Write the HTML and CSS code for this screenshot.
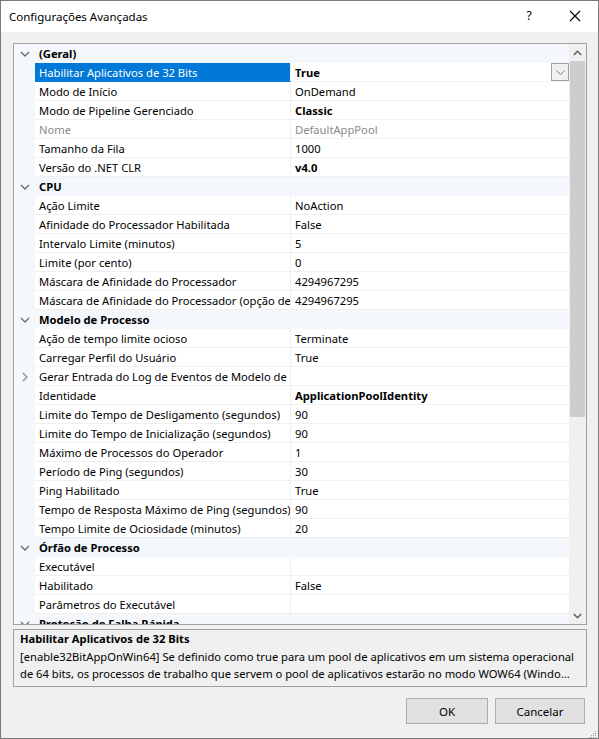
FILE: index.html
```html
<!DOCTYPE html>
<html lang="pt">
<head>
<meta charset="utf-8">
<link rel="stylesheet" href="styles.css">
</head>
<body>
<div class="window">
  <div class="titlebar">
    <span class="title">Configurações Avançadas</span>
    <span class="help">?</span>
    <span class="close"><svg width="12" height="12" viewBox="0 0 12 12"><path d="M1 1 L11 11 M11 1 L1 11" stroke="#000" stroke-width="1.1" fill="none"/></svg></span>
  </div>
  <div class="content">
    <div class="grid">
      <div class="rows">
        <div class="row cat"><span class="gut"><svg class="chev" width="10" height="6" viewBox="0 0 10 6"><path d="M1 1 L5 5 L9 1" stroke="#6d6d6d" stroke-width="1.4" fill="none"/></svg></span><span class="name">(Geral)</span><span class="val"></span></div>
        <div class="row sel"><span class="gut"></span><span class="name">Habilitar Aplicativos de 32 Bits</span><span class="val b">True<span class="dd"><svg width="9" height="5" viewBox="0 0 9 5"><path d="M0.5 0.5 L4.5 4.5 L8.5 0.5" stroke="#777" stroke-width="1" fill="none"/></svg></span></span></div>
        <div class="row"><span class="gut"></span><span class="name">Modo de Início</span><span class="val">OnDemand</span></div>
        <div class="row"><span class="gut"></span><span class="name">Modo de Pipeline Gerenciado</span><span class="val b">Classic</span></div>
        <div class="row dis"><span class="gut"></span><span class="name">Nome</span><span class="val">DefaultAppPool</span></div>
        <div class="row"><span class="gut"></span><span class="name">Tamanho da Fila</span><span class="val">1000</span></div>
        <div class="row"><span class="gut"></span><span class="name">Versão do .NET CLR</span><span class="val b">v4.0</span></div>
        <div class="row cat"><span class="gut"><svg class="chev" width="10" height="6" viewBox="0 0 10 6"><path d="M1 1 L5 5 L9 1" stroke="#6d6d6d" stroke-width="1.4" fill="none"/></svg></span><span class="name">CPU</span><span class="val"></span></div>
        <div class="row"><span class="gut"></span><span class="name">Ação Limite</span><span class="val">NoAction</span></div>
        <div class="row"><span class="gut"></span><span class="name">Afinidade do Processador Habilitada</span><span class="val">False</span></div>
        <div class="row"><span class="gut"></span><span class="name">Intervalo Limite (minutos)</span><span class="val">5</span></div>
        <div class="row"><span class="gut"></span><span class="name">Limite (por cento)</span><span class="val">0</span></div>
        <div class="row"><span class="gut"></span><span class="name">Máscara de Afinidade do Processador</span><span class="val">4294967295</span></div>
        <div class="row"><span class="gut"></span><span class="name">Máscara de Afinidade do Processador (opção de 64 bits)</span><span class="val">4294967295</span></div>
        <div class="row cat"><span class="gut"><svg class="chev" width="10" height="6" viewBox="0 0 10 6"><path d="M1 1 L5 5 L9 1" stroke="#6d6d6d" stroke-width="1.4" fill="none"/></svg></span><span class="name">Modelo de Processo</span><span class="val"></span></div>
        <div class="row"><span class="gut"></span><span class="name">Ação de tempo limite ocioso</span><span class="val">Terminate</span></div>
        <div class="row"><span class="gut"></span><span class="name">Carregar Perfil do Usuário</span><span class="val">True</span></div>
        <div class="row"><span class="gut"><svg class="chev" width="6" height="10" viewBox="0 0 6 10"><path d="M1 1 L5 5 L1 9" stroke="#8a8a8a" stroke-width="1.3" fill="none"/></svg></span><span class="name">Gerar Entrada do Log de Eventos de Modelo de Processo</span><span class="val"></span></div>
        <div class="row"><span class="gut"></span><span class="name">Identidade</span><span class="val b">ApplicationPoolIdentity</span></div>
        <div class="row"><span class="gut"></span><span class="name">Limite do Tempo de Desligamento (segundos)</span><span class="val">90</span></div>
        <div class="row"><span class="gut"></span><span class="name">Limite do Tempo de Inicialização (segundos)</span><span class="val">90</span></div>
        <div class="row"><span class="gut"></span><span class="name">Máximo de Processos do Operador</span><span class="val">1</span></div>
        <div class="row"><span class="gut"></span><span class="name">Período de Ping (segundos)</span><span class="val">30</span></div>
        <div class="row"><span class="gut"></span><span class="name">Ping Habilitado</span><span class="val">True</span></div>
        <div class="row"><span class="gut"></span><span class="name">Tempo de Resposta Máximo de Ping (segundos)</span><span class="val">90</span></div>
        <div class="row"><span class="gut"></span><span class="name">Tempo Limite de Ociosidade (minutos)</span><span class="val">20</span></div>
        <div class="row cat"><span class="gut"><svg class="chev" width="10" height="6" viewBox="0 0 10 6"><path d="M1 1 L5 5 L9 1" stroke="#6d6d6d" stroke-width="1.4" fill="none"/></svg></span><span class="name">Órfão de Processo</span><span class="val"></span></div>
        <div class="row"><span class="gut"></span><span class="name">Executável</span><span class="val"></span></div>
        <div class="row"><span class="gut"></span><span class="name">Habilitado</span><span class="val">False</span></div>
        <div class="row"><span class="gut"></span><span class="name">Parâmetros do Executável</span><span class="val"></span></div>
        <div class="row cat"><span class="gut"><svg class="chev" width="10" height="6" viewBox="0 0 10 6"><path d="M1 1 L5 5 L9 1" stroke="#6d6d6d" stroke-width="1.4" fill="none"/></svg></span><span class="name">Proteção de Falha Rápida</span><span class="val"></span></div>
      </div>
      <div class="scrollbar">
        <div class="arrow"><svg width="9" height="6" viewBox="0 0 9 6"><path d="M0.8 5 L4.5 1.3 L8.2 5" stroke="#606060" stroke-width="1.6" fill="none"/></svg></div>
        <div class="track"><div class="thumb"></div></div>
        <div class="arrow"><svg width="9" height="6" viewBox="0 0 9 6"><path d="M0.8 1 L4.5 4.7 L8.2 1" stroke="#606060" stroke-width="1.6" fill="none"/></svg></div>
      </div>
    </div>
    <div class="desc">
      <div class="desc-title">Habilitar Aplicativos de 32 Bits</div>
      <div class="desc-text">[enable32BitAppOnWin64] Se definido como true para um pool de aplicativos em um sistema operacional de 64 bits, os processos de trabalho que servem o pool de aplicativos estarão no modo WOW64 (Windo...</div>
    </div>
    <div class="buttons">
      <button class="btn ok">OK</button>
      <button class="btn cancel">Cancelar</button>
    </div>
  </div>
  <div class="grip"><svg width="10" height="10" viewBox="0 0 10 10"><g fill="#a0a0a0"><rect x="8" y="2" width="1" height="1"/><rect x="6" y="4" width="1" height="1"/><rect x="8" y="4" width="1" height="1"/><rect x="4" y="6" width="1" height="1"/><rect x="6" y="6" width="1" height="1"/><rect x="8" y="6" width="1" height="1"/><rect x="2" y="8" width="1" height="1"/><rect x="4" y="8" width="1" height="1"/><rect x="6" y="8" width="1" height="1"/><rect x="8" y="8" width="1" height="1"/></g></svg></div>
</div>
</body>
</html>
```

FILE: styles.css
```css
* { box-sizing: border-box; }
html, body { margin: 0; padding: 0; }
body {
  width: 599px;
  height: 739px;
  font-family: "Noto Sans", "Liberation Sans", sans-serif;
  font-size: 11.2px;
  color: #000;
  background: #f0f0f0;
  overflow: hidden;
}
.window {
  position: relative;
  width: 599px;
  height: 739px;
  border: 1px solid #7a7a7a;
  background: #f0f0f0;
  display: flex;
  flex-direction: column;
}
.titlebar {
  height: 31px;
  background: #fff;
  display: flex;
  align-items: center;
  padding-left: 8px;
  flex: none;
}
.title { font-size: 11.5px; flex: 1; padding-bottom: 1px; }
.help { width: 46px; text-align: center; font-size: 12px; padding-bottom: 2px; }
.close { width: 46px; display: flex; justify-content: center; padding-bottom: 1px; }
.content {
  flex: 1;
  padding: 11px 11px 0 12px;
  display: flex;
  flex-direction: column;
}
.grid {
  height: 582px;
  border: 1px solid #a0a0a0;
  background: #fff;
  display: flex;
  overflow: hidden;
}
.rows { flex: 1; overflow: hidden; }
.row {
  height: 19px;
  display: grid;
  grid-template-columns: 21px 256px 1fr;
  line-height: 17px;
}
.row .gut {
  background: #f4f7fc;
  display: flex;
  align-items: center;
  justify-content: center;
  padding-left: 1px;
}
.row .name {
  padding: 1px 0 0 4px;
  border-bottom: 1px solid #f0f0f0;
  border-right: 1px solid #f0f0f0;
  white-space: nowrap;
  overflow: hidden;
  text-overflow: clip;
}
.row .val {
  padding: 1px 0 0 4px;
  border-bottom: 1px solid #f0f0f0;
  white-space: nowrap;
  overflow: hidden;
  position: relative;
}
.b { font-weight: bold; }
.row.cat { background: #f4f7fc; }
.row.cat .name { font-weight: bold; border-right: none; border-bottom: none; overflow: visible; }
.row.cat .val { border-bottom: none; }
.row.sel .name { background: #0078d7; color: #fff; border-bottom-color: #0078d7; }
.row.dis .name, .row.dis .val { color: #8a8a8a; }
.dd {
  position: absolute;
  right: 0;
  top: 0;
  width: 18px;
  height: 18px;
  border: 1px solid #a0a0a0;
  background: #f0f0f0;
  display: flex;
  align-items: center;
  justify-content: center;
}
.scrollbar {
  width: 17px;
  flex: none;
  background: #f0f0f0;
  display: flex;
  flex-direction: column;
}
.arrow {
  height: 17px;
  display: flex;
  align-items: center;
  justify-content: center;
}
.track { flex: 1; }
.thumb {
  margin: 0 1px;
  height: 356px;
  background: #cdcdcd;
}
.desc {
  margin-top: 4px;
  height: 58px;
  border: 1px solid #a0a0a0;
  padding: 0 6px 0 6px;
  line-height: 17px;
}
.desc-title { font-weight: bold; margin-bottom: 1px; }
.desc-text { padding-right: 4px; }
.buttons {
  margin-top: 11px;
  display: flex;
  justify-content: flex-end;
  gap: 7px;
  padding-right: 2px;
}
.btn {
  height: 26px;
  font-family: inherit;
  font-size: 11.5px;
  background: #e1e1e1;
  border: 1px solid #adadad;
  padding: 0;
  color: #000;
}
.ok { width: 82px; }
.cancel { width: 90px; }
.grip {
  position: absolute;
  right: 1px;
  bottom: 1px;
  width: 10px;
  height: 10px;
}
```
